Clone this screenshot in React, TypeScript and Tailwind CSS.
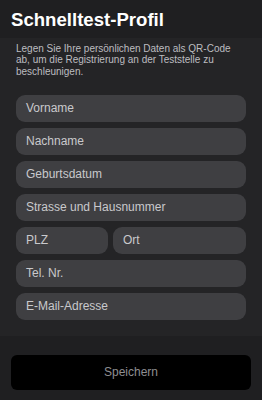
export default function App() {
  const field =
    'h-[27px] rounded-[9px] bg-[#3f3f42] px-[10px] flex items-center text-[12px] text-[#c9c9cc]'

  return (
    <div className="flex h-[400px] w-[262px] flex-col bg-[#242426] font-['Liberation_Sans',Arial,sans-serif]">
      <div className="h-[38px] bg-[#1f1f21] px-[11px] pt-[9px]">
        <h1 className="text-[18.6px] font-bold leading-[22px] text-white">Schnelltest-Profil</h1>
      </div>
      <p className="px-[16px] pt-[4.5px] text-[10px] leading-[11.8px] text-[#bdbdc0]">
        Legen Sie Ihre persönlichen Daten als QR-Code ab, um die Registrierung an der Teststelle zu
        beschleunigen.
      </p>
      <div className="mt-[17px] flex flex-col gap-[6px] px-[16px]">
        <div className={field}>Vorname</div>
        <div className={field}>Nachname</div>
        <div className={field}>Geburtsdatum</div>
        <div className={field}>Strasse und Hausnummer</div>
        <div className="flex gap-[5px]">
          <div className={field + ' w-[92px]'}>PLZ</div>
          <div className={field + ' flex-1'}>Ort</div>
        </div>
        <div className={field}>Tel. Nr.</div>
        <div className={field}>E-Mail-Adresse</div>
      </div>
      <div className="mt-[16px] flex-1 bg-[#1f1f21] px-[11px] pt-[19px]">
        <button
          type="button"
          className="flex h-[35px] w-full items-center justify-center rounded-[6px] bg-black text-[12px] text-[#8e8e91]"
        >
          Speichern
        </button>
      </div>
    </div>
  )
}
